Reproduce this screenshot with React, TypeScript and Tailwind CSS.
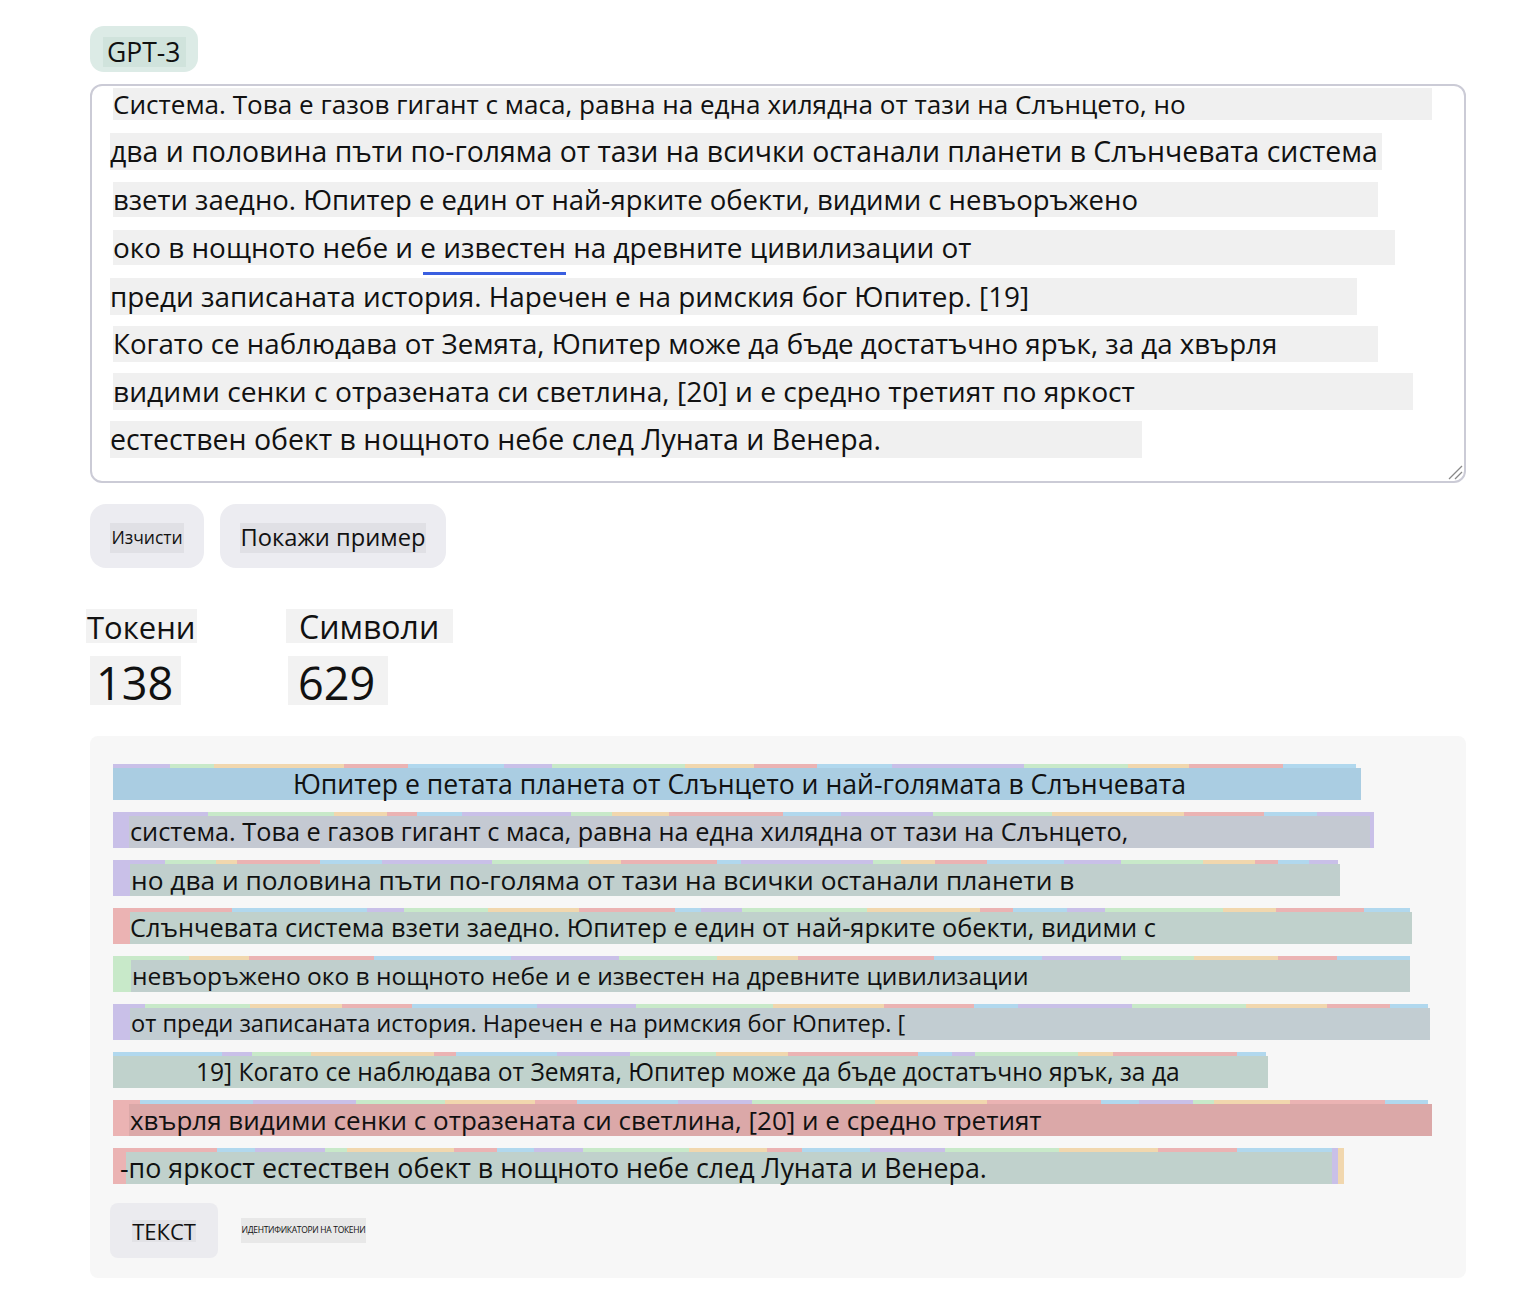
import React from "react";

const PURPLE = "#c9c0e8";
const GREEN = "#c8e9c9";
const ORANGE = "#f1d7ae";
const RED = "#ebb3b3";
const BLUE = "#b1d8ee";
const CYCLE = [PURPLE, GREEN, ORANGE, RED, BLUE];

function segments(total: number, seed: number, start: number) {
  const out: { w: number; c: string }[] = [];
  let x = 0;
  let s = seed;
  let i = start;
  while (x < total) {
    s = (s * 9301 + 49297) % 233280;
    const w = Math.min(total - x, 18 + Math.floor((s / 233280) * 120));
    out.push({ w, c: CYCLE[i % 5] });
    x += w;
    i++;
  }
  return out;
}

type TokLine = {
  text: string;
  stripe: number;
  boxLeft: number;
  boxWidth: number;
  bg: string;
  indent: number;
  size: string;
  seed: number;
  start: number;
  endColor?: string;
};

const tokLines: TokLine[] = [
  { text: "Юпитер е петата планета от Слънцето и най-голямата в Слънчевата", stripe: 1243, boxLeft: 0, boxWidth: 1248, bg: "#aacde2", indent: 180, size: "text-[26.6px]", seed: 3, start: 0 },
  { text: "система. Това е газов гигант с маса, равна на една хилядна от тази на Слънцето,", stripe: 1261, boxLeft: 16, boxWidth: 1241, bg: "#c4c9d2", indent: 1, size: "text-[25.3px]", seed: 11, start: 0 },
  { text: "но два и половина пъти по-голяма от тази на всички останали планети в", stripe: 1225, boxLeft: 17, boxWidth: 1210, bg: "#c0cfcd", indent: 1, size: "text-[26.3px]", seed: 27, start: 0 },
  { text: "Слънчевата система взети заедно. Юпитер е един от най-ярките обекти, видими с", stripe: 1297, boxLeft: 17, boxWidth: 1282, bg: "#c0d1cc", indent: 0, size: "text-[25.4px]", seed: 41, start: 3 },
  { text: "невъоръжено око в нощното небе и е известен на древните цивилизации", stripe: 1297, boxLeft: 18, boxWidth: 1279, bg: "#c0cfcd", indent: 1, size: "text-[24.5px]", seed: 57, start: 1 },
  { text: "от преди записаната история. Наречен е на римския бог Юпитер. [", stripe: 1315, boxLeft: 17, boxWidth: 1300, bg: "#c2cdd2", indent: 1, size: "text-[23.6px]", seed: 73, start: 0 },
  { text: "19] Когато се наблюдава от Земята, Юпитер може да бъде достатъчно ярък, за да", stripe: 1153, boxLeft: 0, boxWidth: 1155, bg: "#c0d2cc", indent: 83, size: "text-[24.6px]", seed: 89, start: 4 },
  { text: "хвърля видими сенки с отразената си светлина, [20] и е средно третият", stripe: 1315, boxLeft: 16, boxWidth: 1303, bg: "#dba8a8", indent: 1, size: "text-[26px]", seed: 97, start: 3 },
  { text: "-по яркост естествен обект в нощното небе след Луната и Венера.", stripe: 1225, boxLeft: 13, boxWidth: 1206, bg: "#c0d1cc", indent: -6, size: "text-[26.8px]", seed: 113, start: 3, endColor: ORANGE },
];

type InLine = { text: string; ml: string; w: string; h: string; mt: string; size: string };

const inputLines: InLine[] = [
  { text: "Система. Това е газов гигант с маса, равна на една хилядна от тази на Слънцето, но", ml: "ml-[21px]", w: "w-[1319px]", h: "h-[32px]", mt: "mt-[2px]", size: "text-[26.1px]" },
  { text: "два и половина пъти по-голяма от тази на всички останали планети в Слънчевата система", ml: "ml-[18px]", w: "w-[1272px]", h: "h-[37px]", mt: "mt-[13px]", size: "text-[28.4px]" },
  { text: "взети заедно. Юпитер е един от най-ярките обекти, видими с невъоръжено", ml: "ml-[21px]", w: "w-[1265px]", h: "h-[35px]", mt: "mt-[12px]", size: "text-[27.5px]" },
  { text: "око в нощното небе и ", ml: "ml-[21px]", w: "w-[1282px]", h: "h-[35px]", mt: "mt-[13px]", size: "text-[27.9px]" },
  { text: "преди записаната история. Наречен е на римския бог Юпитер. [19]", ml: "ml-[18px]", w: "w-[1247px]", h: "h-[37px]", mt: "mt-[13px]", size: "text-[27.9px]" },
  { text: "Когато се наблюдава от Земята, Юпитер може да бъде достатъчно ярък, за да хвърля", ml: "ml-[21px]", w: "w-[1265px]", h: "h-[36px]", mt: "mt-[11px]", size: "text-[27.7px]" },
  { text: "видими сенки с отразената си светлина, [20] и е средно третият по яркост", ml: "ml-[21px]", w: "w-[1300px]", h: "h-[37px]", mt: "mt-[11px]", size: "text-[28.2px]" },
  { text: "естествен обект в нощното небе след Луната и Венера.", ml: "ml-[18px]", w: "w-[1032px]", h: "h-[37px]", mt: "mt-[11px]", size: "text-[28.5px]" },
];

export default function App() {
  return (
    <div className="min-h-[1292px] w-[1528px] bg-white font-['Open_Sans','Noto_Sans',sans-serif] text-[#111]">
      <div className="pl-[90px] pt-[26px]">
        {/* model pill */}
        <div className="flex h-[46px] w-[108px] items-center rounded-[14px] bg-[#dcebe6] pl-[13px]">
          <span className="mt-[6px] flex h-[30px] w-[83px] items-center bg-[#d0e3dc] pl-[4px] text-[26.5px] leading-none">GPT-3</span>
        </div>

        {/* textarea */}
        <div className="relative mt-[12px] h-[399px] w-[1376px] rounded-[12px] border-2 border-[#cbcbd6] bg-white">
          <div className="flex flex-col">
            {inputLines.map((l, i) => (
              <div key={i} className={`${l.ml} ${l.w} ${l.h} ${l.mt} ${l.size} flex items-center whitespace-nowrap bg-[#f0f0f0] leading-none`}>
                {i === 3 ? (
                  <span>
                    око в нощното небе и{" "}
                    <span className="relative">
                      е известен
                      <span className="absolute left-[3px] right-[0px] -bottom-[9px] h-[3px] bg-[#3a5fe0]" />
                    </span>{" "}
                    на древните цивилизации от
                  </span>
                ) : (
                  <span>{l.text}</span>
                )}
              </div>
            ))}
          </div>
          <svg className="absolute bottom-[1px] right-[1px]" width="16" height="16" viewBox="0 0 16 16">
            <line x1="15" y1="2" x2="2" y2="15" stroke="#888" strokeWidth="1.2" />
            <line x1="15" y1="8" x2="8" y2="15" stroke="#888" strokeWidth="1.2" />
          </svg>
        </div>

        {/* buttons */}
        <div className="mt-[21px] flex gap-[16px]">
          <div className="flex h-[64px] w-[114px] items-center justify-center rounded-[16px] bg-[#ececf1]">
            <span className="mt-[3px] flex h-[30px] items-center bg-[#e0e0e5] px-[1px] text-[17.5px] leading-none">Изчисти</span>
          </div>
          <div className="flex h-[64px] w-[226px] items-center justify-center rounded-[16px] bg-[#ececf1]">
            <span className="mt-[3px] flex h-[30px] items-center bg-[#e0e0e5] px-[1px] text-[23.7px] leading-none">Покажи пример</span>
          </div>
        </div>

        {/* stats */}
        <div className="mt-[41px] flex">
          <div className="-ml-[4px] flex w-[200px] flex-col">
            <span className="flex h-[34px] w-[111px] items-end bg-[#f2f2f2] pl-[1px] text-[31px] leading-[1]">Токени</span>
            <span className="ml-[4px] mt-[13px] flex h-[49px] w-[91px] items-end bg-[#f2f2f2] pl-[6px] text-[45px] leading-[0.95]">138</span>
          </div>
          <div className="flex flex-col">
            <span className="flex h-[34px] w-[167px] items-end bg-[#f2f2f2] pl-[13px] text-[32px] leading-[1]">Символи</span>
            <span className="ml-[2px] mt-[13px] flex h-[49px] w-[100px] items-end bg-[#f2f2f2] pl-[10px] text-[45px] leading-[0.95]">629</span>
          </div>
        </div>

        {/* output panel */}
        <div className="mt-[31px] h-[542px] w-[1376px] rounded-[8px] bg-[#f7f7f7] pl-[23px] pt-[28px]">
          <div className="flex flex-col gap-[12px]">
            {tokLines.map((l, i) => {
              const segs = segments(l.stripe, l.seed, l.start);
              return (
                <div key={i} className="grid h-[36px]">
                  <div className="col-start-1 row-start-1 flex h-[36px]">
                    {segs.map((s, j) => (
                      <div key={j} className="h-full" style={{ width: s.w, background: s.c }} />
                    ))}
                    {l.endColor ? <div className="h-full w-[6px]" style={{ background: l.endColor }} /> : null}
                  </div>
                  <div
                    className={`col-start-1 row-start-1 mt-[4px] flex h-[32px] items-center whitespace-nowrap ${l.size} leading-none`}
                    style={{ marginLeft: l.boxLeft, width: l.boxWidth, background: l.bg, paddingLeft: Math.max(0, l.indent) }}
                  >
                    <span style={{ marginLeft: Math.min(0, l.indent) }}>{l.text}</span>
                  </div>
                </div>
              );
            })}
          </div>

          <div className="mt-[19px] flex items-center gap-[23px]">
            <div className="-ml-[3px] flex h-[55px] w-[108px] items-center justify-center rounded-[8px] bg-[#ebebef]">
              <span className="bg-[#e2e2e6] text-[22px] uppercase leading-none">Текст</span>
            </div>
            <span className="flex h-[25px] w-[125px] items-center justify-center bg-[#e8e8e8] text-[8.5px] uppercase leading-none tracking-[-0.3px]">
              Идентификатори на токени
            </span>
          </div>
        </div>
      </div>
    </div>
  );
}
